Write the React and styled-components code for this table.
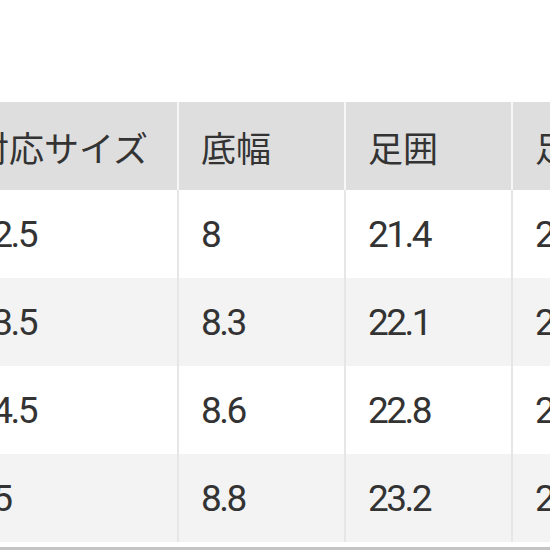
import React from 'react';
import styled, { createGlobalStyle } from 'styled-components';

const GlobalStyle = createGlobalStyle`
  html, body {
    margin: 0;
    padding: 0;
    background: #ffffff;
  }
  body {
    font-family: Roboto, "Noto Sans CJK JP", sans-serif;
  }
`;

const Page = styled.div`
  width: 550px;
  height: 550px;
  overflow: hidden;
  padding-top: 102px;
  box-sizing: border-box;
  background: #ffffff;
`;

const Frame = styled.div`
  margin-left: -48px;
  width: 700px;
  border-bottom: 3px solid #c4c4c4;
  padding-bottom: 5px;
`;

const Table = styled.table`
  border-collapse: collapse;
  table-layout: fixed;
  width: 700px;
  color: #333333;
`;

const HeadCell = styled.th`
  height: 88px;
  width: ${(p) => p.width}px;
  padding: 0 0 0 22px;
  box-sizing: border-box;
  background: #dedede;
  border-right: 2px solid #f7f7f7;
  text-align: left;
  font-family: "Noto Sans CJK JP", sans-serif;
  font-weight: 400;
  font-size: 35px;
  letter-spacing: 0;
  vertical-align: middle;
`;

const Row = styled.tr`
  background: ${(p) => (p.striped ? '#f3f3f3' : '#ffffff')};
`;

const Cell = styled.td`
  height: 88px;
  padding: 0 0 0 22px;
  box-sizing: border-box;
  border-right: 2px solid #e6e6e6;
  font-family: Roboto, sans-serif;
  font-size: 37px;
  letter-spacing: -2.5px;
  vertical-align: middle;
`;

const columns = [
  { label: '対応サイズ', width: 226 },
  { label: '底幅', width: 167 },
  { label: '足囲', width: 167 },
  { label: '足長', width: 140 },
];

const rows = [
  ['22.5', '8', '21.4', '22.5'],
  ['23.5', '8.3', '22.1', '23.5'],
  ['24.5', '8.6', '22.8', '24.5'],
  ['25', '8.8', '23.2', '25'],
];

export default function App() {
  return (
    <>
      <GlobalStyle />
      <Page>
        <Frame>
          <Table>
            <thead>
              <tr>
                {columns.map((c) => (
                  <HeadCell key={c.label} width={c.width}>
                    {c.label}
                  </HeadCell>
                ))}
              </tr>
            </thead>
            <tbody>
              {rows.map((r, i) => (
                <Row key={i} striped={i % 2 === 1}>
                  {r.map((v, j) => (
                    <Cell key={j}>{v}</Cell>
                  ))}
                </Row>
              ))}
            </tbody>
          </Table>
        </Frame>
      </Page>
    </>
  );
}
